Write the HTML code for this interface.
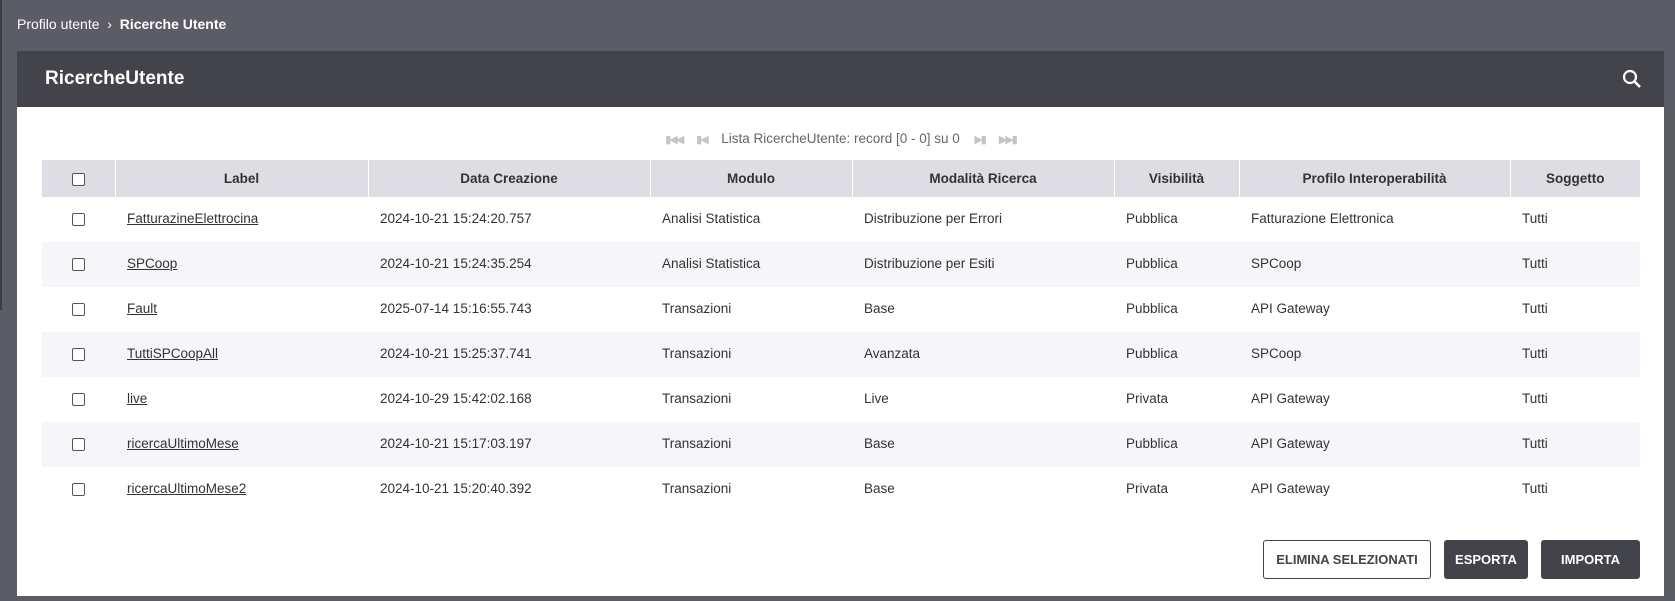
<!DOCTYPE html>
<html><head><meta charset="utf-8"><style>
*{margin:0;padding:0;box-sizing:border-box}
body{width:1675px;height:601px;background:#5c5c66;font-family:"Liberation Sans",Arial,sans-serif;position:relative;overflow:hidden}
.lb{position:absolute;left:0;top:0;width:2px;height:310px;background:#3c3c44}
.bc{position:absolute;left:17px;top:16px;color:#fff;font-size:14px}
.bc b{font-weight:bold}
.panel{position:absolute;left:17px;top:51px;width:1647px;height:545px;background:#fff}
.hd{height:56px;background:#43434b;color:#fff;font-size:19px;font-weight:bold;padding:17px 0 0 28px}
.srch{position:absolute;right:22px;top:18px}
.pg{position:absolute;top:80px;left:0;width:100%;text-align:center;color:#666;font-size:13.5px}
.pg span.i{color:#c4c4c8;font-size:11px;margin:0 7px;letter-spacing:-2px}
table{position:absolute;left:25px;top:109px;border-collapse:collapse;font-size:13.5px;color:#333;table-layout:fixed;width:1598px}
th{background:#dddde3;height:37px;font-weight:bold;border-left:1px solid #fff;text-align:center;color:#333}
th:first-child{border-left:none}
td{height:45px;padding-left:12px;padding-bottom:2px}
tr:nth-child(odd) td{background:#f5f5fa}
td a{color:#333;text-decoration:underline}
.cb{display:inline-block;width:13px;height:13px;border:1px solid #555;border-radius:2px;background:#fff;vertical-align:middle}
td.c,th.c{text-align:center;padding-left:0}
.btn{position:absolute;top:489px;height:39px;font-size:13px;font-weight:bold;display:flex;align-items:center;justify-content:center;border-radius:3px}
</style></head><body>
<div class="lb"></div>
<div class="bc">Profilo utente &nbsp;›&nbsp; <b>Ricerche Utente</b></div>
<div class="panel">
<div class="hd">RicercheUtente</div>
<svg class="srch" width="20" height="20" viewBox="0 0 20 20"><circle cx="8" cy="8" r="6" fill="none" stroke="#fff" stroke-width="2.2"/><path d="M12.5 12.5L18 18" stroke="#fff" stroke-width="2.6"/></svg>
<div class="pg"><span class="i">▮◀◀</span><span class="i">▮◀</span> &nbsp;Lista RicercheUtente: record [0 - 0] su 0&nbsp; <span class="i">▶▮</span><span class="i">▶▶▮</span></div>
<table>
<colgroup><col style="width:73px"><col style="width:253px"><col style="width:282px"><col style="width:202px"><col style="width:262px"><col style="width:125px"><col style="width:271px"><col style="width:130px"></colgroup>
<thead><tr><th class="c"><span class="cb"></span></th><th>Label</th><th>Data Creazione</th><th>Modulo</th><th>Modalità Ricerca</th><th>Visibilità</th><th>Profilo Interoperabilità</th><th>Soggetto</th></tr></thead>
<tbody>
<tr style="display:none"></tr>
<tr><td class="c"><span class="cb"></span></td><td><a>FatturazineElettrocina</a></td><td>2024-10-21 15:24:20.757</td><td>Analisi Statistica</td><td>Distribuzione per Errori</td><td>Pubblica</td><td>Fatturazione Elettronica</td><td>Tutti</td></tr>
<tr><td class="c"><span class="cb"></span></td><td><a>SPCoop</a></td><td>2024-10-21 15:24:35.254</td><td>Analisi Statistica</td><td>Distribuzione per Esiti</td><td>Pubblica</td><td>SPCoop</td><td>Tutti</td></tr>
<tr><td class="c"><span class="cb"></span></td><td><a>Fault</a></td><td>2025-07-14 15:16:55.743</td><td>Transazioni</td><td>Base</td><td>Pubblica</td><td>API Gateway</td><td>Tutti</td></tr>
<tr><td class="c"><span class="cb"></span></td><td><a>TuttiSPCoopAll</a></td><td>2024-10-21 15:25:37.741</td><td>Transazioni</td><td>Avanzata</td><td>Pubblica</td><td>SPCoop</td><td>Tutti</td></tr>
<tr><td class="c"><span class="cb"></span></td><td><a>live</a></td><td>2024-10-29 15:42:02.168</td><td>Transazioni</td><td>Live</td><td>Privata</td><td>API Gateway</td><td>Tutti</td></tr>
<tr><td class="c"><span class="cb"></span></td><td><a>ricercaUltimoMese</a></td><td>2024-10-21 15:17:03.197</td><td>Transazioni</td><td>Base</td><td>Pubblica</td><td>API Gateway</td><td>Tutti</td></tr>
<tr><td class="c"><span class="cb"></span></td><td><a>ricercaUltimoMese2</a></td><td>2024-10-21 15:20:40.392</td><td>Transazioni</td><td>Base</td><td>Privata</td><td>API Gateway</td><td>Tutti</td></tr>
</tbody></table>
<div class="btn" style="left:1246px;width:168px;border:1px solid #43434b;color:#43434b;background:#fff">ELIMINA SELEZIONATI</div>
<div class="btn" style="left:1427px;width:84px;background:#43434b;color:#fff">ESPORTA</div>
<div class="btn" style="left:1524px;width:99px;background:#43434b;color:#fff">IMPORTA</div>
</div>
</body></html>
